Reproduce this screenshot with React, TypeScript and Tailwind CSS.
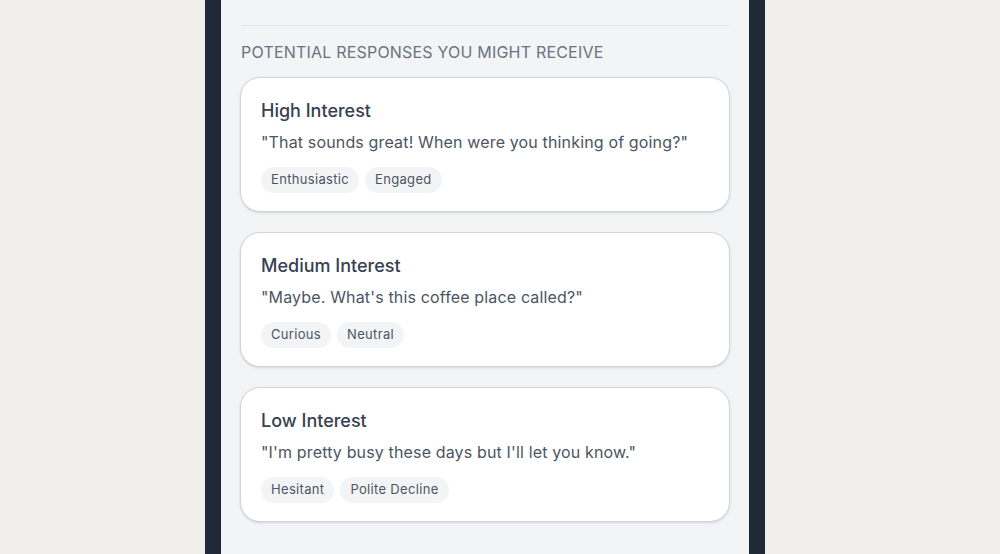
import React from "react";

const cards = [
  {
    title: "High Interest",
    quote: '"That sounds great! When were you thinking of going?"',
    tags: ["Enthusiastic", "Engaged"],
  },
  {
    title: "Medium Interest",
    quote: '"Maybe. What\'s this coffee place called?"',
    tags: ["Curious", "Neutral"],
  },
  {
    title: "Low Interest",
    quote: '"I\'m pretty busy these days but I\'ll let you know."',
    tags: ["Hesitant", "Polite Decline"],
  },
];

export default function App() {
  return (
    <div
      className="w-[1000px] h-[554px] overflow-hidden bg-[#f0efeb] flex"
      style={{ fontFamily: "Inter, 'Noto Sans', sans-serif" }}
    >
      <div className="ml-[205px] w-[560px] h-full bg-[#1f2937] px-4">
        <div className="h-full bg-[#f3f4f6] px-5">
          <div className="h-[26px] border-b border-[#e5e7eb]" />
          <h2 className="mt-[14px] text-base leading-6 uppercase tracking-[0.2px] text-[#6b7280]">
            Potential responses you might receive
          </h2>
          <div className="mt-[13px] flex flex-col gap-5 -mx-px">
            {cards.map((c) => (
              <div
                key={c.title}
                className="bg-white rounded-[20px] border border-[#d1d5db] shadow-sm px-5 pt-[19px] pb-[18px]"
              >
                <div className="text-lg leading-7 font-medium text-[#374151]">{c.title}</div>
                <div className="mt-[5px] text-base leading-6 text-[#4b5563] tracking-[0.15px]">{c.quote}</div>
                <div className="mt-[13px] flex gap-1.5">
                  {c.tags.map((t) => (
                    <span
                      key={t}
                      className="h-[26px] px-2.5 flex items-center rounded-full bg-[#f3f4f6] text-[13px] text-[#4b5563] tracking-wide"
                    >
                      {t}
                    </span>
                  ))}
                </div>
              </div>
            ))}
          </div>
        </div>
      </div>
    </div>
  );
}
